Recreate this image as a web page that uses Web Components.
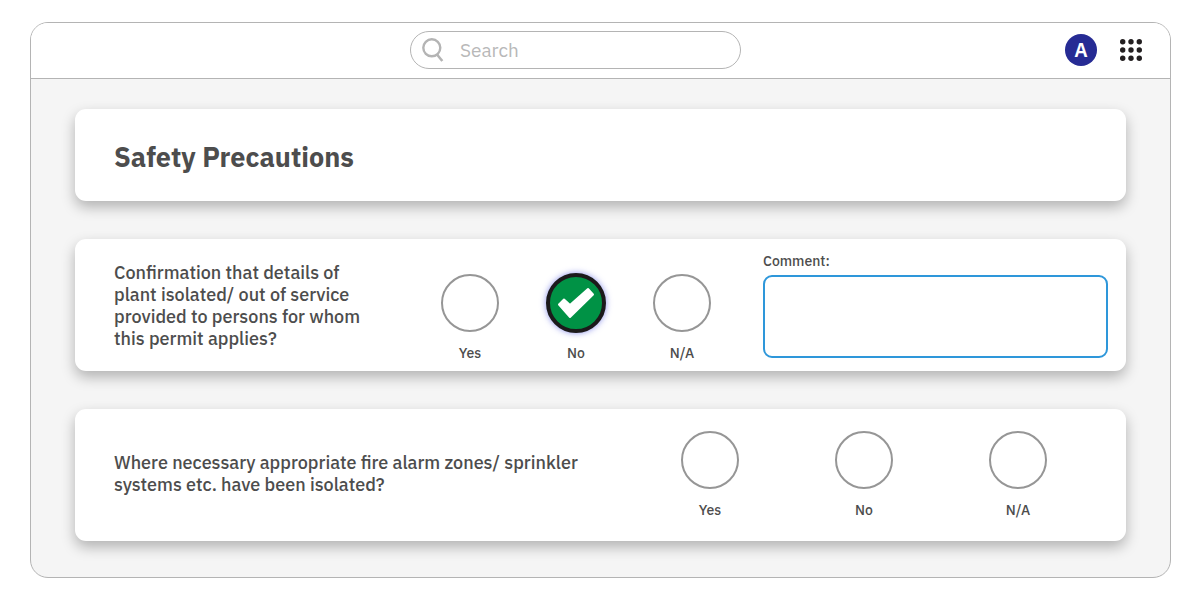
<!DOCTYPE html>
<html lang="en">
<head>
<meta charset="utf-8">
<title>Safety Precautions</title>
<style>
  body {
    margin: 0;
    padding: 22px 30px;
    background: #fff;
    color: #4d4d4d;
    font-family: "IBM Plex Sans", Roboto, sans-serif;
  }
</style>
</head>
<body>
<permit-window>
  <permit-header slot="header" initial="A"></permit-header>
  <permit-card>
    <permit-title>Safety Precautions</permit-title>
  </permit-card>
  <permit-card>
    <permit-question comment selected="No">Confirmation that details of plant isolated/ out of service provided to persons for whom this permit applies?</permit-question>
  </permit-card>
  <permit-card>
    <permit-question>Where necessary appropriate fire alarm zones/ sprinkler systems etc. have been isolated?</permit-question>
  </permit-card>
</permit-window>

<script>
class PermitWindow extends HTMLElement {
  constructor() {
    super()
    this.attachShadow({ mode: 'open' })
    const template = document.createElement('template')
    template.innerHTML = `<style>
      :host {
        display: block;
        border: 1px solid #b4b4b4;
        border-radius: 18px;
        background: #f5f5f5;
        overflow: hidden;
      }
      main {
        display: flex;
        flex-direction: column;
        gap: 38px;
        padding: 30px 44px 36px;
      }
      </style>
      <slot name="header"></slot>
      <main><slot></slot></main>`
    this.shadowRoot.appendChild(template.content.cloneNode(true))
  }
}

customElements.define('permit-window', PermitWindow)

class PermitHeader extends HTMLElement {
  constructor() {
    super()
    this.attachShadow({ mode: 'open' })
    const template = document.createElement('template')
    template.innerHTML = `<style>
      :host { display: block; }
      header {
        display: grid;
        grid-template-columns: 379fr 331fr 429fr;
        align-items: center;
        height: 53px;
        padding-bottom: 2px;
        border-bottom: 1px solid #b4b4b4;
        background: #fff;
      }
      .search {
        grid-column: 2;
        display: flex;
        align-items: center;
        gap: 16px;
        box-sizing: border-box;
        height: 38px;
        padding: 0 11px;
        border: 1px solid #b4b4b4;
        border-radius: 19px;
      }
      .search svg { flex: none; }
      input {
        flex: 1;
        min-width: 0;
        padding: 0;
        border: 0;
        outline: 0;
        background: none;
        color: inherit;
        font: 19px/24px "IBM Plex Sans", Roboto, sans-serif;
      }
      input::placeholder { color: #b8b8b8; opacity: 1; }
      .actions {
        display: flex;
        justify-content: flex-end;
        align-items: center;
        gap: 23px;
        padding-right: 28px;
      }
      button {
        display: grid;
        place-items: center;
        padding: 0;
        border: 0;
        background: none;
      }
      .avatar {
        width: 32px;
        height: 32px;
        border-radius: 50%;
        background: #262b94;
        color: #fff;
        font: 600 20px/24px "IBM Plex Sans", Roboto, sans-serif;
      }
      </style>
      <header>
        <label class="search">
          <svg width="22" height="24" viewBox="0 0 22 24" fill="none" stroke="#b4b4b4" aria-hidden="true">
            <circle cx="9.8" cy="9.8" r="8.5" stroke-width="2.4"/>
            <path d="M15 16.5L20.3 23" stroke-width="2.6"/>
          </svg>
          <input type="text" placeholder="Search" aria-label="Search">
        </label>
        <div class="actions">
          <button class="avatar" type="button"></button>
          <button type="button" aria-label="Apps">
            <svg width="22" height="22" viewBox="0 0 22 22" fill="#231f20">
              <circle cx="2.7" cy="2.7" r="2.7"/><circle cx="11" cy="2.7" r="2.7"/><circle cx="19.3" cy="2.7" r="2.7"/>
              <circle cx="2.7" cy="11" r="2.7"/><circle cx="11" cy="11" r="2.7"/><circle cx="19.3" cy="11" r="2.7"/>
              <circle cx="2.7" cy="19.3" r="2.7"/><circle cx="11" cy="19.3" r="2.7"/><circle cx="19.3" cy="19.3" r="2.7"/>
            </svg>
          </button>
        </div>
      </header>`
    this.shadowRoot.appendChild(template.content.cloneNode(true))
    this.shadowRoot.querySelector('.avatar').textContent = this.getAttribute('initial')
  }
}

customElements.define('permit-header', PermitHeader)

class PermitCard extends HTMLElement {
  constructor() {
    super()
    this.attachShadow({ mode: 'open' })
    const template = document.createElement('template')
    template.innerHTML = `<style>
      :host {
        display: block;
        padding: 0 18px 0 39px;
        border-radius: 11px;
        background: #fff;
        box-shadow: 0 6px 14px rgba(0, 0, 0, 0.28);
      }
      </style><slot></slot>`
    this.shadowRoot.appendChild(template.content.cloneNode(true))
  }
}

customElements.define('permit-card', PermitCard)

class PermitTitle extends HTMLElement {
  constructor() {
    super()
    this.attachShadow({ mode: 'open' })
    const template = document.createElement('template')
    template.innerHTML = `<style>
      :host { display: block; padding: 32px 0 28px; }
      h1 { margin: 0; font-size: 27px; line-height: 32px; font-weight: 700; }
      </style>
      <h1><slot></slot></h1>`
    this.shadowRoot.appendChild(template.content.cloneNode(true))
  }
}

customElements.define('permit-title', PermitTitle)

class PermitChoices extends HTMLElement {
  constructor() {
    super()
    this.attachShadow({ mode: 'open' })
    const selected = this.getAttribute('selected')
    const choices = ['Yes', 'No', 'N/A'].map((name) => `
      <label>
        <span class="dot">
          <input type="radio" name="answer" value="${name}" ${name === selected ? 'checked' : ''}>
          <svg width="38" height="32" viewBox="0 0 38 32" fill="#fff" stroke="#fff" stroke-width="2" stroke-linejoin="round" aria-hidden="true">
            <path d="M2 17.5L7 12.5L13 18L31 2L36 7.5L13 30Z"/>
          </svg>
        </span>
        ${name}
      </label>`).join('')
    const template = document.createElement('template')
    template.innerHTML = `<style>
      :host { display: grid; grid-template-columns: repeat(3, 1fr); }
      label {
        display: flex;
        flex-direction: column;
        align-items: center;
        gap: 14px;
        font-size: 14px;
        line-height: 14px;
        font-weight: 500;
      }
      .dot { display: grid; grid-template: 58px / 58px; place-items: center; }
      .dot > * { grid-area: 1 / 1; }
      input {
        appearance: none;
        box-sizing: border-box;
        width: 58px;
        height: 58px;
        margin: 0;
        border: 2px solid #969696;
        border-radius: 50%;
        background: #fff;
      }
      /* the picked ring is a little larger than its cell */
      input:checked {
        width: 60px;
        height: 60px;
        border: 4px solid #1c1a1b;
        background: #009245;
        box-shadow: 0 0 6px rgba(60, 70, 220, 0.6);
      }
      svg { visibility: hidden; pointer-events: none; }
      input:checked + svg { visibility: visible; }
      </style>${choices}`
    this.shadowRoot.appendChild(template.content.cloneNode(true))
  }
}

customElements.define('permit-choices', PermitChoices)

class PermitComment extends HTMLElement {
  constructor() {
    super()
    this.attachShadow({ mode: 'open' })
    const template = document.createElement('template')
    template.innerHTML = `<style>
      :host { display: flex; flex-direction: column; gap: 5px; }
      label { font-size: 14px; line-height: 18px; font-weight: 500; }
      textarea {
        box-sizing: border-box;
        width: 100%;
        height: 83px;
        margin: 0;
        padding: 8px;
        border: 2px solid #2e97da;
        border-radius: 9px;
        outline: 0;
        resize: none;
        color: inherit;
        font: 14px/18px "IBM Plex Sans", Roboto, sans-serif;
      }
      </style>
      <label for="comment">Comment:</label>
      <textarea id="comment"></textarea>`
    this.shadowRoot.appendChild(template.content.cloneNode(true))
  }
}

customElements.define('permit-comment', PermitComment)

class PermitQuestion extends HTMLElement {
  constructor() {
    super()
    this.attachShadow({ mode: 'open' })
    const template = document.createElement('template')
    template.innerHTML = `<style>
      :host {
        display: grid;
        grid-template-columns: 491fr 462fr;
        column-gap: 28px;
        align-items: center;
        box-sizing: border-box;
        min-height: 132px;
        padding: 10px 13px 13px 0;
      }
      :host([comment]) {
        grid-template-columns: 275fr 318fr 345fr;
        padding: 13px 0 11px;
      }
      :host([comment]) p { padding-right: 20px; }
      :host([comment]) permit-choices { align-self: end; }
      permit-comment { align-self: start; }
      p { margin: 0; font-size: 18px; line-height: 22px; font-weight: 500; }
      </style>
      <p><slot></slot></p>
      <permit-choices selected="${this.getAttribute('selected') || ''}"></permit-choices>
      ${this.hasAttribute('comment') ? '<permit-comment></permit-comment>' : ''}`
    this.shadowRoot.appendChild(template.content.cloneNode(true))
  }
}

customElements.define('permit-question', PermitQuestion)
</script>
</body>
</html>
